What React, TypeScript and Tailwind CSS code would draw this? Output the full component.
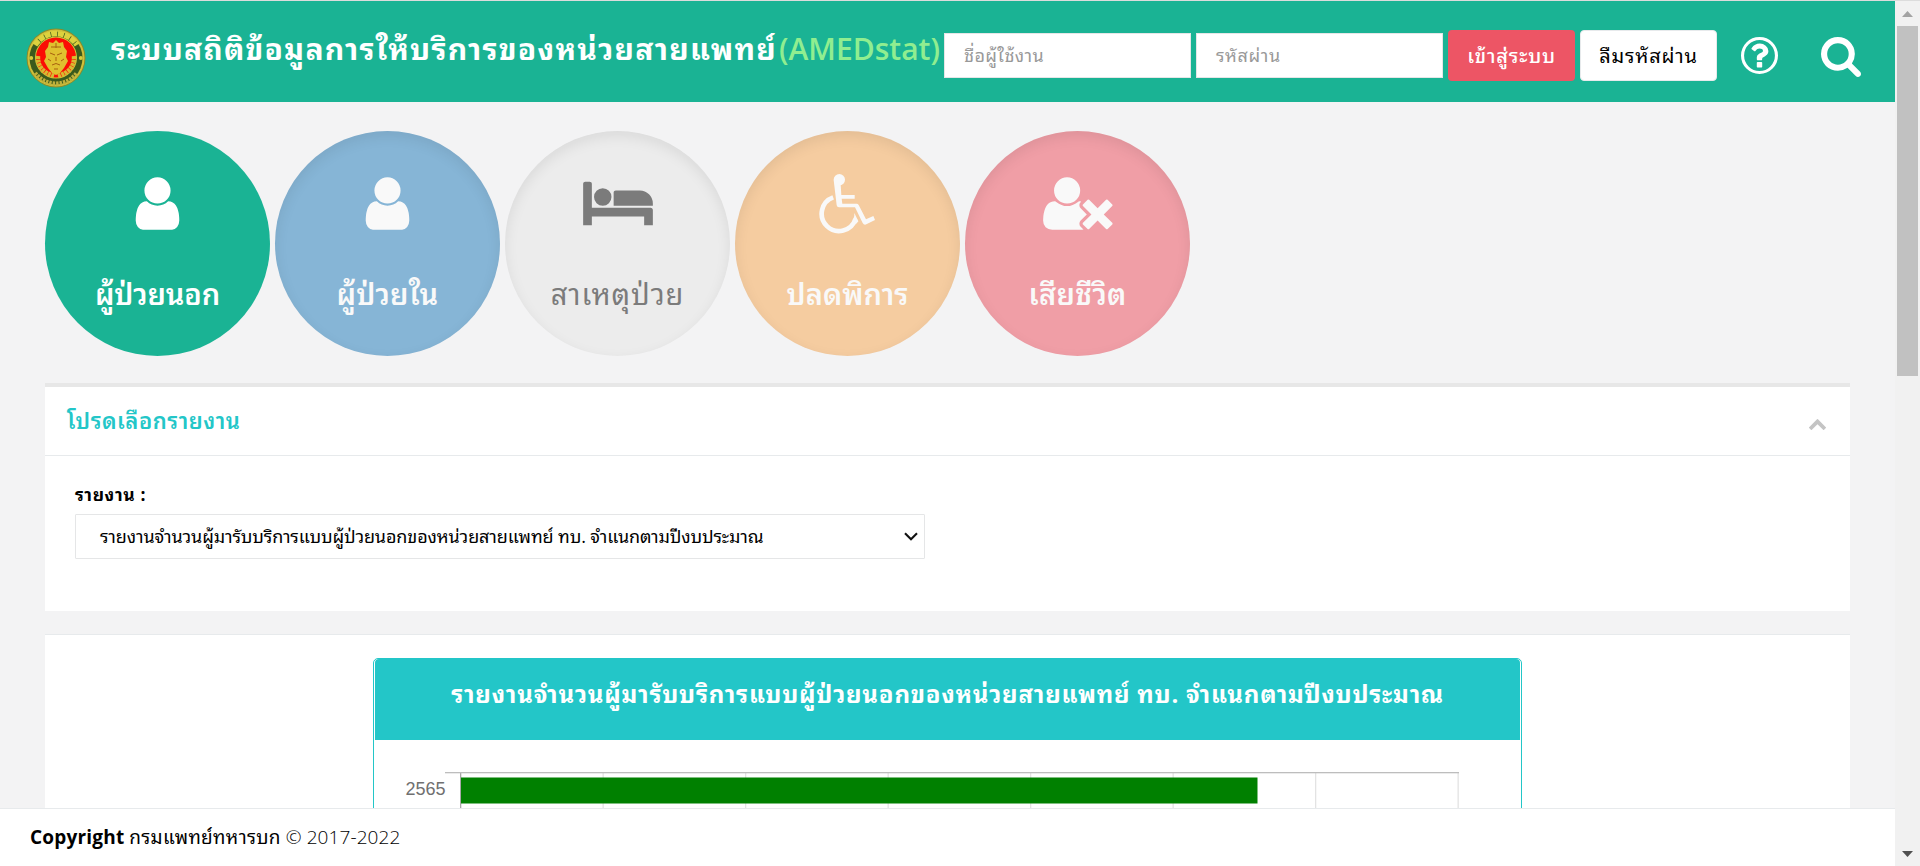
import React from 'react';

const USER = 'M1536 1399q0 109-62.5 187t-150.5 78h-854q-88 0-150.5-78t-62.5-187q0-85 8.5-160.5t31.5-152 58.5-131 94-89 134.5-34.5q131 128 313 128t313-128q76 0 134.5 34.5t94 89 58.5 131 31.5 152 8.5 160.5zm-256-887q0 159-112.5 271.5t-271.5 112.5-271.5-112.5-112.5-271.5 112.5-271.5 271.5-112.5 271.5 112.5 112.5 271.5z';
const BED = 'M256 1024h1728q26 0 45 19t19 45v448h-256v-256h-1536v256h-256v-1216q0-26 19-45t45-19h128q26 0 45 19t19 45v704zm576-320q0-106-75-181t-181-75-181 75-75 181 75 181 181 75 181-75 75-181zm1216 256v-64q0-159-112.5-271.5t-271.5-112.5h-704q-26 0-45 19t-19 45v384h1152z';
const USER_TIMES = 'M704 896q-159 0-271.5-112.5t-112.5-271.5 112.5-271.5 271.5-112.5 271.5 112.5 112.5 271.5-112.5 271.5-271.5 112.5zm1077 320l249 249q9 9 9 23 0 13-9 22l-136 136q-9 9-22 9-14 0-23-9l-249-249-249 249q-9 9-23 9-13 0-22-9l-136-136q-9-9-9-22 0-14 9-23l249-249-249-249q-9-9-9-23 0-13 9-22l136-136q9-9 22-9 14 0 23 9l249 249 249-249q9-9 23-9 13 0 22 9l136 136q9 9 9 22 0 14-9 23zm-498 0l-181 181q-37 37-37 91 0 53 37 90l83 83q-21 3-44 3h-874q-121 0-194-69t-73-190q0-53 3.5-103.5t14-109 26.5-108.5 43-97.5 62-81 85.5-53.5 111.5-20q19 0 39 17 154 122 319 122t319-122q20-17 39-17 28 0 57 6-28 27-41 50t-13 56q0 54 37 91z';
const SEARCH = 'M1216 832q0-185-131.5-316.5t-316.5-131.5-316.5 131.5-131.5 316.5 131.5 316.5 316.5 131.5 316.5-131.5 131.5-316.5zm512 832q0 52-38 90t-90 38q-54 0-90-38l-343-342q-179 124-399 124-143 0-273.5-55.5t-225-150-150-225-55.5-273.5 55.5-273.5 150-225 225-150 273.5-55.5 273.5 55.5 225 150 150 225 55.5 273.5q0 220-124 399l343 343q37 37 37 90z';
const QUESTION = 'M880 1072v160q0 14-9 23t-23 9h-160q-14 0-23-9t-9-23v-160q0-14 9-23t23-9h160q14 0 23 9t9 23zM1136 576q0 50-15 90t-45.5 69-52 44-59.5 36q-32 18-46.5 28t-26 24-11.5 29v32q0 14-9 23t-23 9h-160q-14 0-23-9t-9-23v-68q0-35 10.5-64.5t24-47.5 39-35.5 41-25.5 44.5-21q53-25 75-43t22-49q0-42-43.5-71.5t-95.5-29.5q-56 0-95 27-29 20-80 83-9 12-25 12-11 0-19-6l-108-82q-10-7-12-20t5-23q122-192 349-192 129 0 238.5 89.5t109.5 214.5z';
const CHEVRON_UP = 'M1683 1331l-166 165q-19 19-45 19t-45-19l-531-531-531 531q-19 19-45 19t-45-19l-166-165q-19-19-19-45.5t19-45.5l742-741q19-19 45-19t45 19l742 741q19 19 19 45.5t-19 45.5z';

function Glyph({ d, box, className }: { d: string; box: string; className: string }) {
  return (
    <svg viewBox={box} className={className} fill="currentColor">
      <path d={d} />
    </svg>
  );
}

function Wheelchair() {
  return (
    <svg viewBox="4 0 176 183" className="h-[61px] w-[58.7px]" fill="currentColor">
      <circle cx="68" cy="20" r="17" />
      <path d="M51 22L72 36L74 66H114V77H75L77 92H120Q124 92 126 96L148 139L170 129L175 141L149 154Q142 157 138 150L115 103H67Q61 103 60 97Z" />
      <path d="M49.500 73A52 52 0 1 0 116.500 138" fill="none" stroke="currentColor" strokeWidth="14" />
      <path d="M113 120L125 145L119 152L110 138Q114 130 113 120Z" />
    </svg>
  );
}

const SHADE = 'shadow-[inset_0_5px_14px_rgba(0,0,0,0.08)]';
const person = <Glyph d={USER} box="0 0 1792 1792" className="h-[61px] w-[61px]" />;

const circles = [
  { label: 'ผู้ป่วยนอก', icon: person, cls: 'bg-[#1ab394] text-white', text: 'font-semibold tracking-[-0.1px]' },
  { label: 'ผู้ป่วยใน', icon: person, cls: 'bg-[#86b5d6] text-[#f9f9f9] ' + SHADE, text: 'font-semibold tracking-[0.25px]' },
  { label: 'สาเหตุป่วย', icon: <Glyph d={BED} box="0 0 2048 1792" className="h-[61px] w-[70px]" />, cls: 'bg-[#ececec] text-[#7b7b7b] ' + SHADE, text: 'font-normal tracking-[0.9px]' },
  { label: 'ปลดพิการ', icon: <Wheelchair />, cls: 'bg-[#f5cca0] text-[#f9f9f9] ' + SHADE, text: 'font-semibold tracking-[0.1px]' },
  { label: 'เสียชีวิต', icon: <Glyph d={USER_TIMES} box="0 0 2048 1792" className="h-[61px] w-[70px]" />, cls: 'bg-[#f09ea6] text-[#f9f9f9] ' + SHADE, text: 'font-semibold tracking-[0.35px]' },
];

function Emblem() {
  return (
    <svg viewBox="0 0 60 60" className="h-[60px] w-[60px]">
      <circle cx="30" cy="30" r="29.5" fill="#8a8a2a" />
      <circle cx="30" cy="30" r="28.5" fill="#cfc03a" />
      <circle cx="30" cy="30" r="26.5" fill="#3c5a1c" />
      <path d="M9 17 A25 25 0 0 1 51 17" fill="none" stroke="#dcd23e" strokeWidth="5.5" strokeDasharray="6 .7" />
      <path d="M9 45 A26 26 0 0 0 51 45" fill="none" stroke="#c0b03a" strokeWidth="4.500" strokeDasharray="2.500 1" />
      <circle cx="30" cy="29.500" r="21" fill="#d6ca3c" />
      <circle cx="30" cy="29.500" r="20" fill="#fb0d05" />
      <path d="M12 28 Q11 43 28 48 M48 28 Q49 43 32 48" fill="none" stroke="#d8b930" strokeWidth="4.500" strokeDasharray="3 .6" />
      <path d="M30 12 l3 3 4-1 1 5 3 4 -1 6 2 4 -4 7 -4 5 -4 2 -4-2 -4-5 -4-7 2-4 -1-6 3-4 1-5 4 1z" fill="#e0c02f" />
      <path d="M24 25l5 2M36 25l-5 2M30 29v4M26 37q4-3 8 0M25 19h10M30 15v5M22 31l3 2M38 31l-3 2M28 41h4" stroke="#a8600f" strokeWidth="1" fill="none" />
      <circle cx="5.200" cy="30" r="2" fill="#d6cc3c" />
      <circle cx="54.800" cy="30" r="2" fill="#d6cc3c" />
    </svg>
  );
}

function Header() {
  return (
    <header className="flex h-[102px] items-start border-t border-[#dcdcdc] bg-[#1ab394] pl-[26px]">
      <div className="mt-[27px]"><Emblem /></div>
      <h1 className="ml-[25px] mt-6 flex h-[46px] w-[831px] items-center gap-[4px] whitespace-nowrap text-[30px] font-bold text-white">
        <span className="w-[664px] tracking-[1.28px]">ระบบสถิติข้อมูลการให้บริการของหน่วยสายแพทย์</span>
        <span className="text-[30px] font-semibold text-[#90ee90]">(AMEDstat)</span>
      </h1>
      <div className="ml-[2px] mt-8 flex h-[45px] w-[247px] items-center border border-[#e5e6e7] bg-white pl-[19px] text-[18px] tracking-[0.4px] text-[#999]">ชื่อผู้ใช้งาน</div>
      <div className="ml-[5px] mt-8 flex h-[45px] w-[247px] items-center border border-[#e5e6e7] bg-white pl-[19px] text-[18px] tracking-[0.6px] text-[#999]">รหัสผ่าน</div>
      <button className="ml-[5px] mt-[29px] h-[51px] w-[127px] whitespace-nowrap rounded-[4px] bg-[#ed5565] text-[20px] font-medium tracking-[0.8px] text-white">เข้าสู่ระบบ</button>
      <button className="ml-[5px] mt-[29px] h-[51px] w-[137px] whitespace-nowrap rounded-[4px] border border-[#e7eaec] bg-white text-[20px] tracking-[0.8px] text-black">ลืมรหัสผ่าน</button>
      <svg viewBox="0 0 1536 1536" className="ml-6 mt-9 h-[37px] w-[37px] text-white" fill="currentColor">
        <circle cx="768" cy="768" r="704" fill="none" stroke="currentColor" strokeWidth="128" />
        <path d={QUESTION} />
      </svg>
      <Glyph d={SEARCH} box="64 128 1664 1664" className="ml-[43px] mt-9 h-[40px] w-[40px] text-white" />
    </header>
  );
}

const ticks = [0, 1, 2, 3, 4, 5, 6, 7];

function Chart() {
  return (
    <svg viewBox="0 0 1145 70" className="h-[70px] w-[1145px]">
      {ticks.map((t) => (
        <rect key={t} x={86 + t * 142.5} y="32" width="1.3" height="38" fill={t === 0 ? '#a8a8a8' : '#e3e3e3'} />
      ))}
      <rect x="71" y="32" width="1014" height="1.3" fill="#bdbdbd" />
      <rect x="87" y="37.5" width="796.5" height="26" fill="#008000" />
      <text x="71.5" y="55" textAnchor="end" fontFamily="Liberation Sans, sans-serif" fontSize="18" fill="#707070">2565</text>
    </svg>
  );
}

export default function App() {
  return (
    <div className="flex h-[866px] w-[1920px] overflow-hidden bg-[#f3f3f4] font-['Open_Sans',Tahoma,'Leelawadee_UI','Noto_Looped_Thai','Noto_Sans_Thai_Looped',Loma,Waree,Garuda,sans-serif] text-black">
      <div className="flex h-full w-[1895px] flex-col">
        <Header />
        <main className="h-[706px] overflow-hidden px-[45px] pt-[29px]">
          <nav className="flex gap-[5px]">
            {circles.map((c) => (
              <button key={c.label} className={'flex h-[225px] w-[225px] flex-col items-center rounded-full pt-[42px] ' + c.cls}>
                {c.icon}
                <span className={'mt-[35px] flex h-[50px] items-center whitespace-nowrap text-[29px] ' + c.text}>{c.label}</span>
              </button>
            ))}
          </nav>
          <section className="mt-[27px] h-[228px] border-t-4 border-[#e7e7e7] bg-white">
            <div className="flex h-[69px] items-start justify-between border-b border-[#e7eaec] pl-[22px] pr-[23px] pt-[17px]">
              <h5 className="text-[22px] font-semibold leading-[32px] tracking-[0.55px] text-[#23c6c8]">โปรดเลือกรายงาน</h5>
              <Glyph d={CHEVRON_UP} box="0 0 1792 1792" className="mt-[10px] h-[19px] w-[19px] text-[#c4c4c4]" />
            </div>
            <div className="px-[30px] pt-[25px]">
              <label className="block h-[33px] text-[17.5px] font-bold leading-[27px] tracking-[0.6px]">รายงาน :</label>
              <div className="flex h-[45px] w-[850px] items-center justify-between whitespace-nowrap rounded-[1px] border border-[#e5e6e7] pl-6 pr-[6px] text-[18px] tracking-[-0.13px]">
                <span>รายงานจำนวนผู้มารับบริการแบบผู้ป่วยนอกของหน่วยสายแพทย์ ทบ. จำแนกตามปีงบประมาณ</span>
                <svg viewBox="0 0 14 9" className="h-[9px] w-[14px]"><path d="M1 1.200l6 6 6-6" fill="none" stroke="#111" strokeWidth="2.100" /></svg>
              </div>
            </div>
          </section>
          <section className="mt-[23px] flex h-[300px] justify-center border-t border-[#e7eaec] bg-white pt-[23px]">
            <div className="h-[300px] w-[1149px] rounded-[5px] border border-[#23c6c8]">
              <div className="mx-px flex h-[81px] items-start justify-center whitespace-nowrap rounded-t-[4px] bg-[#23c6c8] pt-[17px] text-[24px] font-bold leading-[36px] tracking-[0.8px] text-white">
                <span>รายงานจำนวนผู้มารับบริการแบบผู้ป่วยนอกของหน่วยสายแพทย์ ทบ. จำแนกตามปีงบประมาณ</span>
              </div>
              <Chart />
            </div>
          </section>
        </main>
        <footer className="flex h-[58px] items-start border-t border-[#e7eaec] bg-white pl-[30px] pt-[15px] text-[19px] leading-[27px]">
          <span className="whitespace-pre"><b className="tracking-[0.2px]">Copyright</b> <span className="tracking-[0.3px]">กรมแพทย์ทหารบก</span> <span className="font-light tracking-[0.1px]">© 2017-2022</span></span>
        </footer>
      </div>
      <aside className="flex w-[25px] flex-col items-center border-t border-[#dcdcdc] bg-[#f1f1f1]">
        <svg viewBox="0 0 11 6" className="mt-[10px] h-[6px] w-[11px]"><path d="M0 6L5.500 0 11 6z" fill="#a3a3a3" /></svg>
        <div className="mt-[9px] h-[350px] w-[21px] bg-[#c1c1c1]" />
        <svg viewBox="0 0 11 6" className="mb-[9px] mt-auto h-[6px] w-[11px]"><path d="M0 0L5.500 6 11 0z" fill="#505050" /></svg>
      </aside>
    </div>
  );
}
